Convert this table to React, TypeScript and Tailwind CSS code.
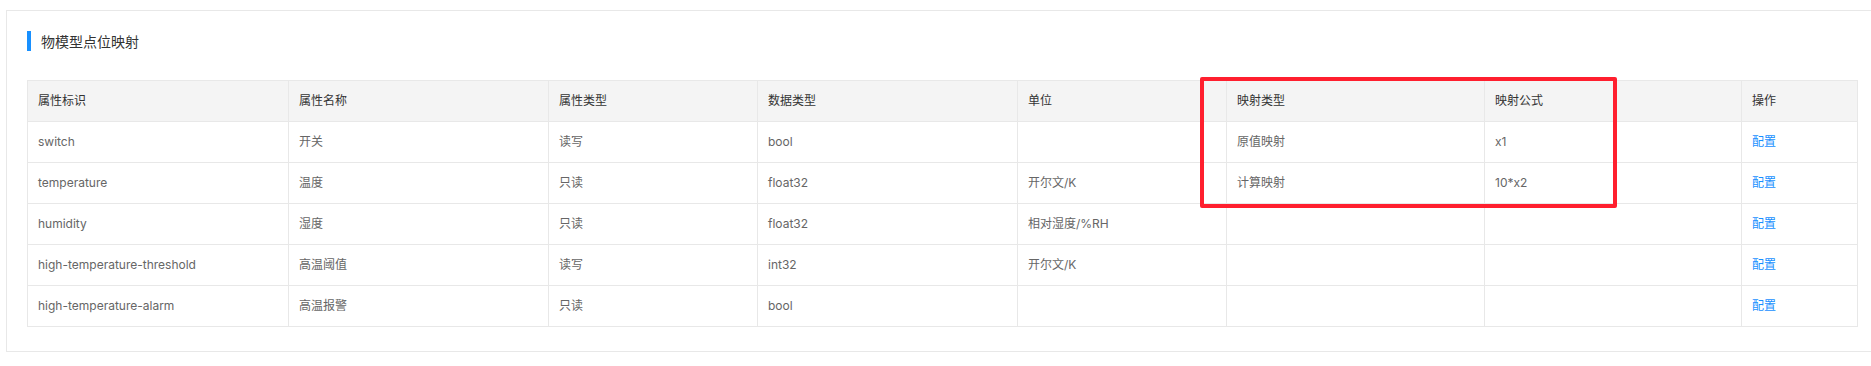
import React from 'react';

type Row = {
  id: string;
  name: string;
  access: string;
  dataType: string;
  unit: string;
  mapType: string;
  formula: string;
};

const rows: Row[] = [
  { id: 'switch', name: '开关', access: '读写', dataType: 'bool', unit: '', mapType: '原值映射', formula: 'x1' },
  { id: 'temperature', name: '温度', access: '只读', dataType: 'float32', unit: '开尔文/K', mapType: '计算映射', formula: '10*x2' },
  { id: 'humidity', name: '湿度', access: '只读', dataType: 'float32', unit: '相对湿度/%RH', mapType: '', formula: '' },
  { id: 'high-temperature-threshold', name: '高温阈值', access: '读写', dataType: 'int32', unit: '开尔文/K', mapType: '', formula: '' },
  { id: 'high-temperature-alarm', name: '高温报警', access: '只读', dataType: 'bool', unit: '', mapType: '', formula: '' },
];

const columns = [
  { title: '属性标识', width: 'w-[261px]' },
  { title: '属性名称', width: 'w-[260px]' },
  { title: '属性类型', width: 'w-[209px]' },
  { title: '数据类型', width: 'w-[260px]' },
  { title: '单位', width: 'w-[209px]' },
  { title: '映射类型', width: 'w-[258px]' },
  { title: '映射公式', width: 'w-[257px]' },
  { title: '操作', width: 'w-[116px]' },
];

const cell = 'h-[41px] border border-[#e8e8e8] px-[10px] text-left align-middle font-normal';

export default function App() {
  return (
    <div
      className="h-[366px] w-[1871px] overflow-hidden bg-white pl-[6px] pt-[10px]"
      style={{ fontFamily: "Inter, 'Noto Sans CJK SC', sans-serif" }}
    >
      <div className="w-[1872px] border border-[#e8e8e8] px-[20px] pb-[24px] pt-[20px]">
        {/* section title */}
        <div className="flex h-[20px] items-center">
          <span className="h-[20px] w-[4px] bg-[#1890ff]" />
          <span className="ml-[10px] text-[14px] text-[#333]">物模型点位映射</span>
        </div>

        <div className="relative mt-[29px]">
          <table className="w-[1830px] table-fixed border-collapse text-[12px]">
            <thead>
              <tr className="bg-[#f4f4f4]">
                {columns.map((c) => (
                  <th key={c.title} className={`${cell} ${c.width} text-[#333]`}>
                    {c.title}
                  </th>
                ))}
              </tr>
            </thead>
            <tbody className="text-[#666]">
              {rows.map((r) => (
                <tr key={r.id}>
                  <td className={cell}>{r.id}</td>
                  <td className={cell}>{r.name}</td>
                  <td className={cell}>{r.access}</td>
                  <td className={cell}>{r.dataType}</td>
                  <td className={cell}>{r.unit}</td>
                  <td className={cell}>{r.mapType}</td>
                  <td className={cell}>{r.formula}</td>
                  <td className={cell}>
                    <a className="cursor-pointer text-[#1890ff]">配置</a>
                  </td>
                </tr>
              ))}
            </tbody>
          </table>

          {/* highlight box */}
          <div className="pointer-events-none absolute left-[1173px] top-[-3px] h-[131px] w-[417px] rounded-[2px] border-[4px] border-[#ff1f2e]" />
        </div>
      </div>
    </div>
  );
}
